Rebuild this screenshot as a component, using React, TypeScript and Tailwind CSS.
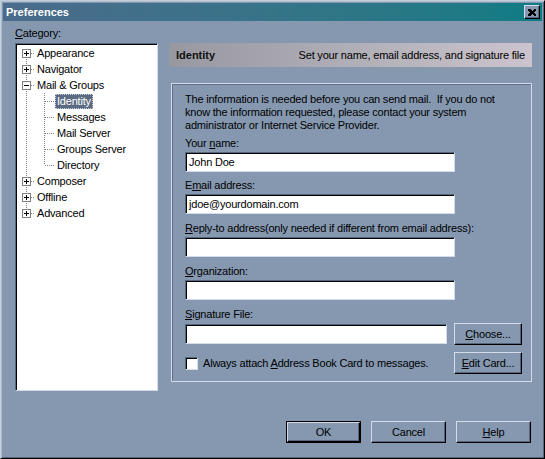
import React from "react";

type Node = {
  label: string;
  level: 0 | 1;
  exp?: "plus" | "minus";
  first?: boolean;
  last?: boolean;
  lastChild?: boolean;
  selected?: boolean;
};

const nodes: Node[] = [
  { label: "Appearance", level: 0, exp: "plus", first: true },
  { label: "Navigator", level: 0, exp: "plus" },
  { label: "Mail & Groups", level: 0, exp: "minus" },
  { label: "Identity", level: 1, selected: true },
  { label: "Messages", level: 1 },
  { label: "Mail Server", level: 1 },
  { label: "Groups Server", level: 1 },
  { label: "Directory", level: 1, lastChild: true },
  { label: "Composer", level: 0, exp: "plus" },
  { label: "Offline", level: 0, exp: "plus" },
  { label: "Advanced", level: 0, exp: "plus", last: true },
];

const dot = "#808080";

// one column of tree connector lines, 16px tall
function Connector({
  width,
  up,
  down,
  across,
  exp,
}: {
  width: number;
  up: boolean;
  down: boolean;
  across: boolean;
  exp?: "plus" | "minus";
}) {
  return (
    <svg width={width} height={16} className="shrink-0" shapeRendering="crispEdges">
      {up && <line x1={9.5} y1={0} x2={9.5} y2={8} stroke={dot} strokeDasharray="1 1" />}
      {down && <line x1={9.5} y1={8} x2={9.5} y2={16} stroke={dot} strokeDasharray="1 1" />}
      {across && <line x1={10} y1={8.5} x2={width} y2={8.5} stroke={dot} strokeDasharray="1 1" />}
      {exp && (
        <g>
          <rect x={5.5} y={4.5} width={8} height={8} fill="#fff" stroke={dot} />
          <line x1={7} y1={8.5} x2={12} y2={8.5} stroke="#000" />
          {exp === "plus" && <line x1={9.5} y1={6} x2={9.5} y2={11} stroke="#000" />}
        </g>
      )}
    </svg>
  );
}

function TreeRow({ node }: { node: Node }) {
  return (
    <div className="flex h-[16px] items-center">
      {node.level === 0 ? (
        <Connector width={18} up={!node.first} down={!node.last} across exp={node.exp} />
      ) : (
        <>
          <Connector width={18} up down across={false} />
          <Connector width={20} up down={!node.lastChild} across />
        </>
      )}
      <span
        className={
          node.selected
            ? "px-[1px] leading-[13px] bg-[#5c6b82] text-white border border-dotted border-[#c8d2de]"
            : "px-[2px] leading-[13px] text-black"
        }
      >
        {node.label}
      </span>
    </div>
  );
}

function U({ children }: { children: React.ReactNode }) {
  return <span className="underline underline-offset-[1px]">{children}</span>;
}

const sunken =
  "bg-white border border-t-[#56667c] border-l-[#56667c] border-b-[#d3dce8] border-r-[#d3dce8] shadow-[inset_1px_1px_0_#000]";
const raised =
  "flex items-center justify-center bg-[#8598b0] border border-t-[#d3dce8] border-l-[#d3dce8] border-b-black border-r-black shadow-[inset_-1px_-1px_0_#56667c]";

function Field({ value, w = "w-[270px]" }: { value?: string; w?: string }) {
  return (
    <div className={`${sunken} ${w} h-[20px] flex items-center px-[3px]`}>
      <span>{value}</span>
    </div>
  );
}

function Button({ children, w, isDefault }: { children: React.ReactNode; w: string; isDefault?: boolean }) {
  if (isDefault) {
    return (
      <div className={`${w} h-[22px] border border-black flex`}>
        <div className={`${raised} flex-1`}>{children}</div>
      </div>
    );
  }
  return <div className={`${raised} ${w} h-[22px]`}>{children}</div>;
}

export default function App() {
  return (
    <div
      className="w-[545px] h-[459px] bg-[#8598b0] border border-t-[#c4cfdc] border-l-[#c4cfdc] border-r-black border-b-black shadow-[inset_1px_1px_0_#aebccd,inset_-1px_-1px_0_#56667c] p-[2px] flex flex-col text-[11px] tracking-[-0.2px] text-black select-none"
      style={{ fontFamily: '"Liberation Sans", Arial, sans-serif' }}
    >
      {/* caption bar */}
      <div className="h-[18px] flex items-center justify-between pl-[3px] pr-[2px] bg-gradient-to-r from-[#4a6b8c] to-[#0b7c84]">
        <span className="font-bold text-white tracking-normal">Preferences</span>
        <div className={`${raised} w-[16px] h-[14px]`}>
          <svg width="8" height="7" viewBox="0 0 8 7" shapeRendering="crispEdges">
            <path d="M0 0h2l2 2 2-2h2v1l-2 2.5 2 2.5v1h-2l-2-2-2 2h-2v-1l2-2.5-2-2.5z" fill="#000" />
          </svg>
        </div>
      </div>

      <div className="flex gap-[10px] pl-[12px] mt-[6px]">
        {/* category tree */}
        <div className="w-[143px] flex flex-col">
          <div className="h-[13px] leading-[13px]">
            <U>C</U>ategory:
          </div>
          <div className={`${sunken} h-[348px] mt-[3px] pt-[1px] pl-[1px]`}>
            {nodes.map((n) => (
              <TreeRow key={n.label} node={n} />
            ))}
          </div>
        </div>

        {/* identity panel */}
        <div className="w-[363px] ml-[1px] mt-[16px] flex flex-col">
          <div className="h-[24px] flex items-center justify-between px-[7px] bg-gradient-to-r from-[#9898a0] via-[#b0aeb6] to-[#ccc4cc]">
            <span className="font-bold text-[#111] tracking-normal">Identity</span>
            <span>Set your name, email address, and signature file</span>
          </div>

          <div className="mt-[16px] ml-[2px] w-[361px] h-[299px] border border-[#d3dce8] shadow-[inset_1px_1px_0_#5f7088] pt-[9px] pl-[13px] flex flex-col leading-[13px]">
            <p className="w-[330px]">
              The information is needed before you can send mail.&nbsp; If you do not
              <br />
              know the information requested, please contact your system
              <br />
              administrator or Internet Service Provider.
            </p>

            <div className="mt-[5px]">
              Your <U>n</U>ame:
            </div>
            <div className="mt-[2px]">
              <Field value="John Doe" />
            </div>

            <div className="mt-[7px]">
              E<U>m</U>ail address:
            </div>
            <div className="mt-[2px]">
              <Field value="jdoe@yourdomain.com" />
            </div>

            <div className="mt-[8px]">
              <U>R</U>eply-to address(only needed if different from email address):
            </div>
            <div className="mt-[2px]">
              <Field />
            </div>

            <div className="mt-[8px]">
              <U>O</U>rganization:
            </div>
            <div className="mt-[2px]">
              <Field />
            </div>

            <div className="mt-[8px]">
              <U>S</U>ignature File:
            </div>
            <div className="mt-[2px] flex items-center gap-[7px]">
              <Field w="w-[262px]" />
              <Button w="w-[68px]">
                <U>C</U>hoose...
              </Button>
            </div>

            <div className="mt-[7px] flex items-center">
              <div className={`${sunken} w-[13px] h-[13px]`} />
              <span className="ml-[5px] w-[251px]">
                Always attach <U>A</U>ddress Book Card to messages.
              </span>
              <Button w="w-[68px]">
                <U>E</U>dit Card...
              </Button>
            </div>
          </div>
        </div>
      </div>

      {/* dialog buttons */}
      <div className="flex justify-end gap-[10px] pr-[11px] mt-[30px]">
        <Button w="w-[75px]" isDefault>
          OK
        </Button>
        <Button w="w-[75px]">Cancel</Button>
        <Button w="w-[75px]">
          <U>H</U>elp
        </Button>
      </div>
    </div>
  );
}
